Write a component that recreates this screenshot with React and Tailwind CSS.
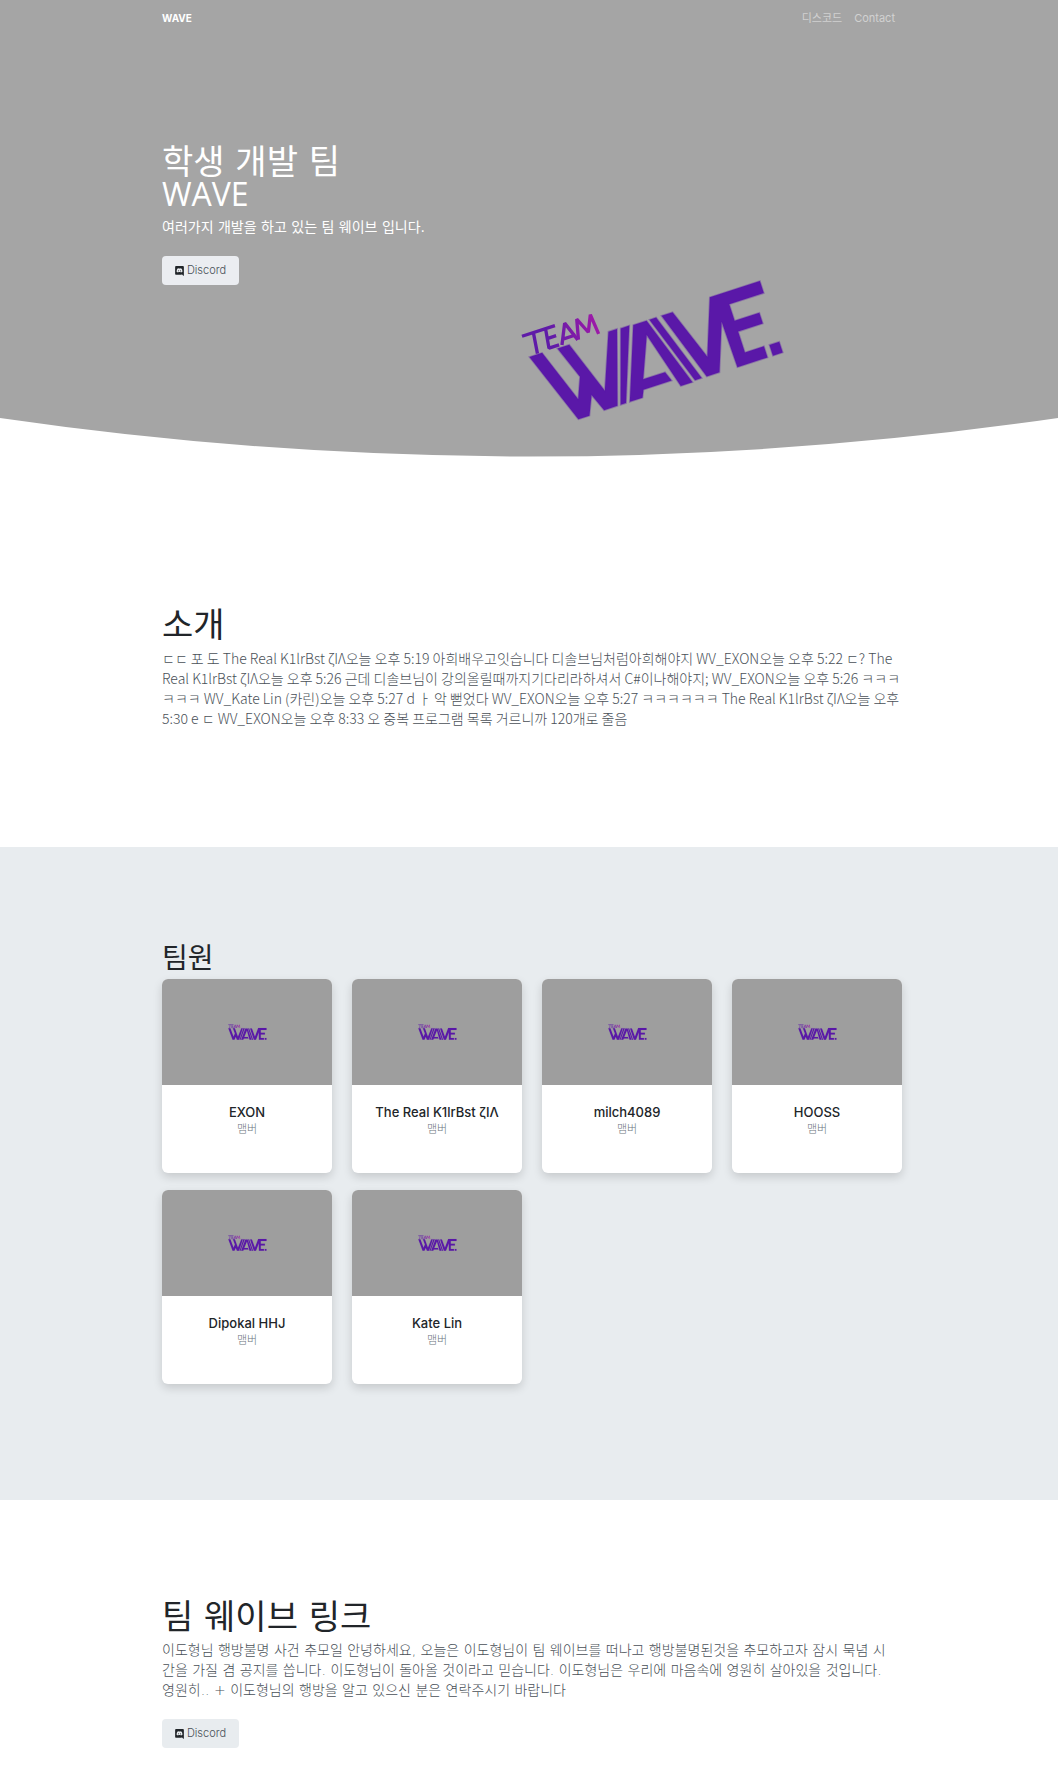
import React from "react";

function LogoMarks() {
  return (
    <>
      <g fill="none" stroke="url(#teamTint)" strokeWidth="10" strokeLinejoin="bevel">
        <path d="M-8 238H96M28 238L20 302M90 268H62M90 297H58L66 240" />
        <path d="M98 300L126 240L148 300M104 284H146" />
        <path d="M150 300L164 240L185 288L207 240L213 302" />
      </g>
      <g fill="#5a18a8" stroke="#5a18a8" strokeOpacity="0.35" strokeWidth="5">
        <path d="M-6 304H34L94 470L120 407L82 306H119L178 470L243 305H270L200 525H158L136 470L111 527H76Z" />
        <path d="M281 307H308L227 525H210Z" />
        <path d="M320 309H362L436 527H399L349 350L298 473H367L378 503H289L279 525H239Z" />
        <path d="M371 309H392L466 524H445Z" />
        <path d="M409 309H444L502 468L564 301H722V339H613V391H691V425H613V491H673V526H578L575 382L522 524H482Z" />
        <path d="M690 492H721V526H690Z" />
      </g>
    </>
  );
}

function LogoTint() {
  return (
    <svg className="absolute size-0" aria-hidden="true">
      <defs>
        <linearGradient id="teamTint" gradientUnits="userSpaceOnUse" x1="-8" y1="0" x2="215" y2="0">
          <stop offset="0.35" stopColor="#5f1ba8" />
          <stop offset="1" stopColor="#9c1aa8" />
        </linearGradient>
      </defs>
    </svg>
  );
}

function DiscordButton({ className }) {
  return (
    <a
      href="#discord"
      className={`inline-flex h-[29px] w-[77px] items-center justify-center gap-[3px] rounded font-['Inter',sans-serif] text-[11px] font-light text-[#495057] ${className}`}
    >
      <svg viewBox="0 0 448 512" className="h-[10px] w-[9px] shrink-0" fill="#212529" aria-hidden="true">
        <path d="M297.216 243.2c0 15.616-11.52 28.416-26.112 28.416-14.336 0-26.112-12.8-26.112-28.416s11.52-28.416 26.112-28.416c14.592 0 26.112 12.8 26.112 28.416zm-119.552-28.416c-14.592 0-26.112 12.8-26.112 28.416s11.776 28.416 26.112 28.416c14.592 0 26.112-12.8 26.112-28.416.256-15.616-11.52-28.416-26.112-28.416zM448 52.736V512c-64.494-56.994-43.868-38.128-118.784-107.776l13.568 47.36H52.48C23.552 451.584 0 428.032 0 398.848V52.736C0 23.552 23.552 0 52.48 0h343.04C424.448 0 448 23.552 448 52.736zm-72.96 242.688c0-82.432-36.864-149.248-36.864-149.248-36.864-27.648-71.936-26.88-71.936-26.88l-3.584 4.096c43.52 13.312 63.744 32.512 63.744 32.512-60.811-33.329-132.244-33.335-191.232-7.424-9.472 4.352-15.104 7.424-15.104 7.424s21.248-20.224 67.328-33.536l-2.56-3.072s-35.072-.768-71.936 26.88c0 0-36.864 66.816-36.864 149.248 0 0 21.504 37.12 78.08 38.912 0 0 9.472-11.52 17.152-21.248-32.512-9.728-44.8-30.208-44.8-30.208 3.766 2.636 9.976 6.053 10.496 6.4 43.21 24.198 104.588 32.126 159.744 8.96 8.96-3.328 18.944-8.192 29.44-15.104 0 0-12.8 20.992-46.336 30.464 7.68 9.728 16.896 20.736 16.896 20.736 56.576-1.792 78.336-38.912 78.336-38.912z" />
      </svg>
      Discord
    </a>
  );
}

function Container({ children }) {
  return (
    <div className="pl-1.5">
      <div className="mx-auto max-w-[740px]">{children}</div>
    </div>
  );
}

function Lines({ lines, className }) {
  return (
    <p className={`text-sm leading-5 font-light text-[#495057] ${className}`}>
      {lines.map((line) => (
        <span key={line} className="block whitespace-nowrap">
          {line}
        </span>
      ))}
    </p>
  );
}

const introLines = [
  "ㄷㄷ 포 도 The Real K1lrBst ζIΛ오늘 오후 5:19 아희배우고잇습니다 디솔브님처럼아희해야지 WV_EXON오늘 오후 5:22 ㄷ? The",
  "Real K1lrBst ζIΛ오늘 오후 5:26 근데 디솔브님이 강의올릴때까지기다리라하셔서 C#이나해야지; WV_EXON오늘 오후 5:26 ㅋㅋㅋ",
  "ㅋㅋㅋ WV_Kate Lin (카린)오늘 오후 5:27 d ㅏ 악 뻗었다 WV_EXON오늘 오후 5:27 ㅋㅋㅋㅋㅋㅋ The Real K1lrBst ζIΛ오늘 오후",
  "5:30 e ㄷ WV_EXON오늘 오후 8:33 오 중복 프로그램 목록 거르니까 120개로 줄음",
];

const linkLines = [
  "이도형님 행방불명 사건 추모일 안녕하세요, 오늘은 이도형님이 팀 웨이브를 떠나고 행방불명된것을 추모하고자 잠시 묵념 시",
  "간을 가질 겸 공지를 씁니다. 이도형님이 돌아올 것이라고 믿습니다. 이도형님은 우리에 마음속에 영원히 살아있을 것입니다.",
  "영원히.. + 이도형님의 행방을 알고 있으신 분은 연락주시기 바랍니다",
];

const members = ["EXON", "The Real K1lrBst ζIΛ", "milch4089", "HOOSS", "Dipokal HHJ", "Kate Lin"];

export default function App() {
  return (
    <div className="bg-white font-['Open_Sans','Noto_Sans_CJK_KR',sans-serif] text-[#212529]">
      <LogoTint />
      <header className="relative h-[457px] overflow-hidden bg-[#a5a5a5] text-white">
        <Container>
          <nav className="flex h-9 items-center justify-between font-['Inter','Noto_Sans_CJK_KR',sans-serif] text-[11px]">
            <a href="#top" className="text-[10px] font-bold">WAVE</a>
            <div className="flex gap-3 pr-[7px] text-white/50">
              <a href="#discord">디스코드</a>
              <a href="#contact">Contact</a>
            </div>
          </nav>
          <div className="flex">
            <div className="w-[338px] pt-[110px]">
              <h1 className="leading-8">
                <span className="block font-['DejaVu_Sans','Noto_Sans_CJK_KR',sans-serif] text-[34px]">학생 개발 팀</span>
                <span className="block text-[32px]">WAVE</span>
              </h1>
              <p className="mt-[7px] font-['DejaVu_Sans','Noto_Sans_CJK_KR',sans-serif] text-sm leading-5 whitespace-nowrap">
                여러가지 개발을 하고 있는 팀 웨이브 입니다.
              </p>
              <DiscordButton className="mt-[19px] bg-[#ebedf1]" />
            </div>
            <svg viewBox="0 0 900 540" className="mt-[224px] h-[180px] w-[300px] shrink-0" role="img" aria-label="TEAM WAVE.">
              <g transform="rotate(-18)">
                <LogoMarks />
              </g>
            </svg>
          </div>
        </Container>
        <svg viewBox="0 0 1058 39" preserveAspectRatio="none" className="absolute bottom-0 left-0 h-[39px] w-full" aria-hidden="true">
          <path d="M0 0Q529 77 1058 0V39H0Z" fill="#ffffff" />
        </svg>
      </header>

      <section className="pt-[147px] pb-[119px]">
        <Container>
          <h2 className="text-[34px] leading-10">소개</h2>
          <Lines lines={introLines} className="mt-1 font-['Noto_Sans_CJK_KR',sans-serif]" />
        </Container>
      </section>

      <section className="bg-[#e8ecef] pt-[93px] pb-[116px]">
        <Container>
          <h2 className="text-[28px] leading-[34px]">팀원</h2>
          <div className="mt-[5px] grid grid-cols-4 gap-x-5 gap-y-[17px]">
            {members.map((name) => (
              <article key={name} className="overflow-hidden rounded-md bg-white text-center shadow-[0_4px_10px_rgba(0,0,0,0.15)]">
                <div className="flex h-[106px] items-center justify-center bg-[#9e9e9e]">
                  <svg viewBox="-10 225 740 305" className="h-4 w-[39px]" role="img" aria-label="TEAM WAVE.">
                    <LogoMarks />
                  </svg>
                </div>
                <div className="pt-[19px] pb-[35px] font-['Inter','Noto_Sans_CJK_KR',sans-serif]">
                  <h3 className="text-[13px] leading-4 font-medium">{name}</h3>
                  <p className="text-[11px] leading-[18px] font-light text-[#6c757d]">맴버</p>
                </div>
              </article>
            ))}
          </div>
        </Container>
      </section>

      <section className="pt-[97px] pb-8">
        <Container>
          <h2 className="font-['DejaVu_Sans','Noto_Sans_CJK_KR',sans-serif] text-[34px] leading-10">팀 웨이브 링크</h2>
          <Lines lines={linkLines} className="mt-[3px] font-['DejaVu_Sans','Noto_Sans_CJK_KR',sans-serif]" />
          <DiscordButton className="mt-[19px] bg-[#e8ecef]" />
        </Container>
      </section>
    </div>
  );
}
